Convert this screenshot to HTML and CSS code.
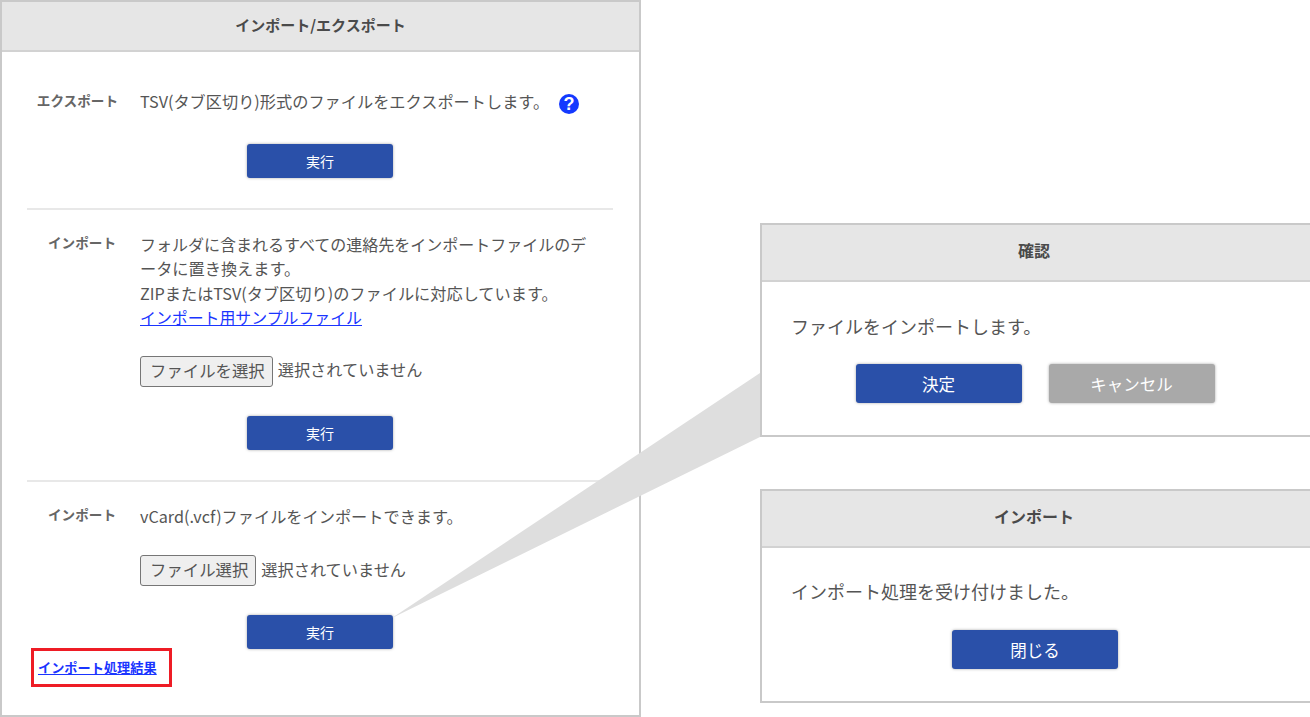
FILE: index.html
```html
<!DOCTYPE html>
<html lang="ja">
<head>
    <meta charset="UTF-8">
    <meta name="viewport" content="width=device-width, initial-scale=1.0">
    <title>インポート/エクスポート</title>
    <link rel="stylesheet" href="styles.css">
</head>
<body>
    <div class="page">
        <div class="panel">
            <div class="panel-title">インポート/エクスポート</div>

            <div class="section section-export">
                <div class="row">
                    <div class="row-label">エクスポート</div>
                    <div class="row-text">TSV(タブ区切り)形式のファイルをエクスポートします。<span class="help-icon">?</span></div>
                </div>
                <div class="actions"><button class="btn btn-run">実行</button></div>
            </div>

            <div class="section section-import">
                <div class="row">
                    <div class="row-label">インポート</div>
                    <div class="row-text">
                        フォルダに含まれるすべての連絡先をインポートファイルのデータに置き換えます。<br>
                        ZIPまたはTSV(タブ区切り)のファイルに対応しています。<br>
                        <a class="sample-link" href="#">インポート用サンプルファイル</a>
                        <div class="file-row">
                            <button class="file-btn">ファイルを選択</button>
                            <span>選択されていません</span>
                        </div>
                    </div>
                </div>
                <div class="actions"><button class="btn btn-run">実行</button></div>
            </div>

            <div class="section section-vcard">
                <div class="row">
                    <div class="row-label">インポート</div>
                    <div class="row-text">
                        vCard(.vcf)ファイルをインポートできます。
                        <div class="file-row">
                            <button class="file-btn">ファイル選択</button>
                            <span>選択されていません</span>
                        </div>
                    </div>
                </div>
                <div class="actions"><button class="btn btn-run">実行</button></div>
                <div class="result-box"><a href="#">インポート処理結果</a></div>
            </div>
        </div>

        <div class="dialogs">
            <div class="dialog dialog-confirm">
                <div class="dialog-title">確認</div>
                <div class="dialog-body">
                    <p>ファイルをインポートします。</p>
                    <div class="dialog-actions">
                        <button class="btn btn-dialog">決定</button>
                        <button class="btn btn-dialog btn-cancel">キャンセル</button>
                    </div>
                </div>
            </div>
            <div class="dialog dialog-done">
                <div class="dialog-title">インポート</div>
                <div class="dialog-body">
                    <p>インポート処理を受け付けました。</p>
                    <div class="dialog-actions">
                        <button class="btn btn-dialog">閉じる</button>
                    </div>
                </div>
            </div>
        </div>

        <svg class="callout" width="1310" height="717" viewBox="0 0 1310 717">
            <polygon points="392,618 760,373 760,437" fill="#dedede"/>
        </svg>
    </div>
</body>
</html>
```

FILE: styles.css
```css
* {
    box-sizing: border-box;
}
html, body {
    margin: 0;
    padding: 0;
    background: #fff;
}
body {
    font-family: "Noto Sans CJK JP", "Noto Sans", sans-serif;
    font-size: 16px;
    color: #555;
}
a {
    color: #1a35ff;
}
.page {
    position: relative;
    display: flex;
    width: 1310px;
    height: 717px;
    overflow: hidden;
}

/* left panel */
.panel {
    width: 641px;
    height: 717px;
    border: 2px solid #c9c9c9;
    flex-shrink: 0;
}
.panel-title {
    height: 50px;
    line-height: 45px;
    text-align: center;
    font-size: 15px;
    font-weight: bold;
    color: #4a4a4a;
    background-color: #e6e6e6;
    border-bottom: 2px solid #d2d2d2;
}
.section {
    margin: 0 26px 0 25px;
    border-bottom: 2px solid #e8e8e8;
}
.section-export {
    height: 158px;
    padding-top: 37px;
}
.section-export .actions {
    margin-top: 30px;
}
.section-import {
    height: 272px;
    padding-top: 22px;
}
.section-vcard {
    position: relative;
    border-bottom: none;
    padding-top: 22px;
}
.row {
    display: flex;
}
.row-label {
    width: 89px;
    margin-top: -2px;
    margin-right: 24px;
    text-align: right;
    font-size: 13.6px;
    font-weight: bold;
    line-height: 24px;
    color: #666;
    flex-shrink: 0;
}
.section-export .row-label {
    width: 91px;
    margin-top: -1px;
    margin-right: 22px;
}
.row-text {
    flex: 1;
    font-size: 16.2px;
    line-height: 24.4px;
    padding-right: 14px;
}
.section-import .row-text::first-line {
    font-size: 16px;
}
.sample-link {
    font-size: 15.9px;
}
.help-icon {
    display: inline-block;
    width: 20px;
    height: 20px;
    margin-left: 10px;
    border-radius: 50%;
    background-color: #1439ff;
    color: #fff;
    font-family: "Liberation Sans", sans-serif;
    font-size: 18px;
    font-weight: bold;
    line-height: 20px;
    text-align: center;
    vertical-align: -2px;
}
.file-row {
    display: flex;
    align-items: center;
    gap: 5px;
    margin-top: 25px;
}
.section-vcard .file-row {
    margin-top: 27px;
}
.file-row span {
    padding-bottom: 3px;
}
.file-btn {
    height: 31px;
    padding: 0 7px 3px 9px;
    font-family: inherit;
    font-size: 16.4px;
    color: #555;
    background-color: #efefef;
    border: 1px solid #767676;
    border-radius: 3px;
}
.actions {
    display: flex;
    justify-content: center;
    margin-top: 29px;
}
.btn {
    border: none;
    border-radius: 3px;
    background-color: #2a50a9;
    color: #fff;
    font-family: inherit;
    font-size: 14px;
    box-shadow: 0 0 3px rgba(0, 0, 0, 0.35);
}
.btn-run {
    width: 146px;
    height: 34px;
}
.result-box {
    position: absolute;
    left: 4px;
    top: 166px;
    width: 141px;
    height: 39px;
    padding-left: 4px;
    border: 3px solid #ee1c25;
    font-size: 13.2px;
    font-weight: bold;
    line-height: 33px;
}

/* right dialogs */
.dialogs {
    flex: 1;
    margin-left: 119px;
    padding-top: 223px;
}
.dialog {
    height: 214px;
    border: 2px solid #c9c9c9;
    border-right: none;
}
.dialog-confirm {
    margin-bottom: 52px;
}
.dialog-title {
    height: 57px;
    padding-right: 4px;
    line-height: 50px;
    text-align: center;
    font-size: 16px;
    font-weight: bold;
    color: #4a4a4a;
    background-color: #e6e6e6;
    border-bottom: 2px solid #d2d2d2;
}
.dialog-confirm .dialog-title {
    line-height: 51px;
}
.dialog-body p {
    margin: 0;
    padding: 31px 0 0 29px;
    font-size: 18px;
    line-height: 24px;
}
.dialog-confirm p {
    padding-top: 32px;
}
.dialog-actions {
    display: flex;
    justify-content: center;
    gap: 27px;
    margin-top: 27px;
    padding-right: 2px;
}
.dialog-confirm .dialog-actions {
    margin-top: 26px;
}
.btn-dialog {
    width: 166px;
    height: 39px;
    font-size: 16.5px;
}
.btn-cancel {
    background-color: #a9a9a9;
}

/* wedge joining the run button to the confirm dialog */
.callout {
    position: absolute;
    left: 0;
    top: 0;
    pointer-events: none;
}
```
